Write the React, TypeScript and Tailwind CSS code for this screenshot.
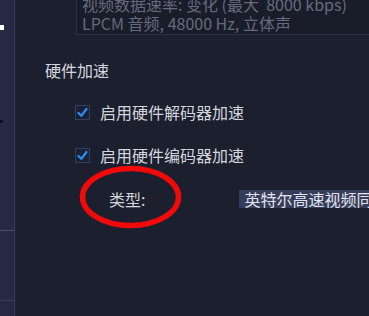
import React from "react";

const font = { fontFamily: '"Noto Sans CJK SC", "Noto Sans", sans-serif' };

const Check = ({ label }: { label: string }) => (
  <div className="flex items-center h-[20px]">
    <div className="w-[15px] h-[15px] shrink-0 bg-[#17223a] border border-[#34405a] flex items-center justify-center">
      <svg width="11" height="11" viewBox="0 0 11 11">
        <path d="M1.5 6 L4.3 8.8 L9.5 2" fill="none" stroke="#2f8ff0" strokeWidth="2.2" strokeLinecap="round" strokeLinejoin="round" />
      </svg>
    </div>
    <span className="ml-[10px] text-[16px] leading-[20px] text-[#d3d6df] whitespace-nowrap">{label}</span>
  </div>
);

export default function App() {
  return (
    <div className="w-[369px] h-[316px] flex bg-[#1c1f2e] overflow-hidden" style={font}>
      {/* side strip */}
      <div className="w-[15px] shrink-0 h-full bg-[#262944] border-r border-[#383c5c] flex flex-col">
        <div className="mt-[25px] w-[4px] h-[5px] bg-white" />
        <div className="mt-[90px] w-[3px] h-[3px] bg-[#0d0f1a]" />
        <div className="mt-[107px] h-px bg-[#4a4e6e]" />
        <div className="mt-[69px] h-px bg-[#3a3e5a]" />
      </div>

      <div className="relative flex-1 min-w-0 overflow-hidden flex flex-col">
        <div className="ml-[61px] -mt-[5px] pl-[5px] pb-px bg-[#191c29] border-l border-b border-[#2c3044] text-[16px] leading-[19px] text-[#666a7e] whitespace-nowrap">
          <div>视频数据速率: 变化 (最大&nbsp;&nbsp;8000 kbps)</div>
          <div>LPCM 音频, 48000 Hz, 立体声</div>
        </div>

        <div className="ml-[30px] mt-[25px] text-[16px] leading-[20px] text-[#d3d6df]">硬件加速</div>

        <div className="ml-[60px] mt-[22px]">
          <Check label="启用硬件解码器加速" />
        </div>
        <div className="ml-[60px] mt-[23px]">
          <Check label="启用硬件编码器加速" />
        </div>

        <div className="mt-[24px] flex items-center whitespace-nowrap">
          <span className="ml-[94px] text-[16px] leading-[20px] text-[#d3d6df]">类型:</span>
          <span className="ml-[94px] pl-[5px] pr-1 h-[18px] flex items-center bg-[#363d5a] text-[16px] leading-[20px] text-[#e0e3ea]">英特尔高速视频同步</span>
        </div>

        {/* red annotation */}
        <svg className="absolute left-[64px] top-[165px]" width="104" height="66" viewBox="0 0 104 66">
          <ellipse cx="51.5" cy="32" rx="48" ry="28.5" fill="none" stroke="#f00a0a" strokeWidth="5.5" />
        </svg>
      </div>
    </div>
  );
}
